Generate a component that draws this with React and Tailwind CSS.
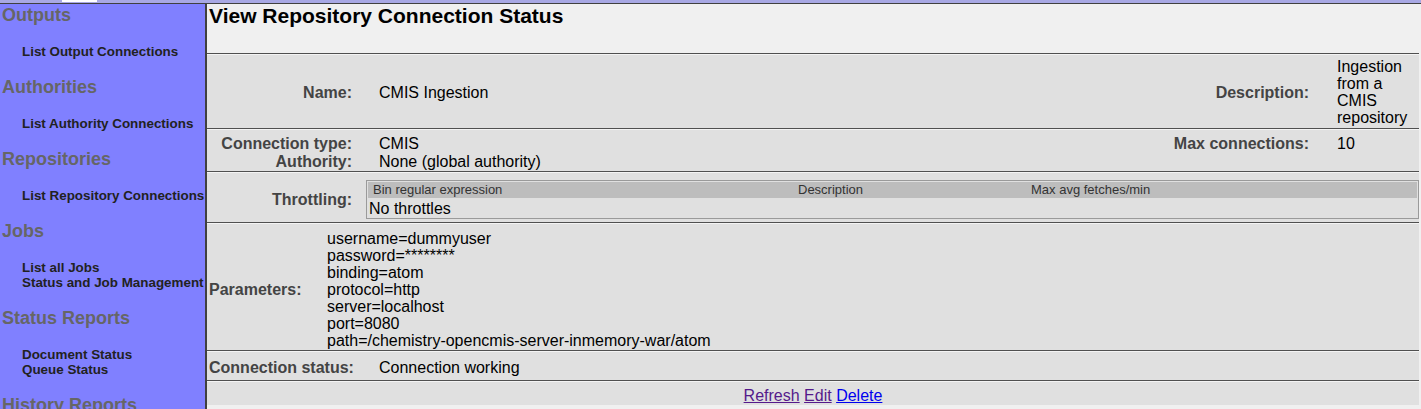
import React from "react";

const font = { fontFamily: '"Liberation Sans", Arial, Helvetica, sans-serif' };

const nav = [
  { title: "Outputs", links: ["List Output Connections"] },
  { title: "Authorities", links: ["List Authority Connections"] },
  { title: "Repositories", links: ["List Repository Connections"] },
  { title: "Jobs", links: ["List all Jobs", "Status and Job Management"] },
  { title: "Status Reports", links: ["Document Status", "Queue Status"] },
  { title: "History Reports", links: [] },
];

const params = [
  "username=dummyuser",
  "password=********",
  "binding=atom",
  "protocol=http",
  "server=localhost",
  "port=8080",
  "path=/chemistry-opencmis-server-inmemory-war/atom",
];

function Separator() {
  return <div className="h-[2px] border-t border-[#505050] bg-[#f4f4f4]" />;
}

function Sidebar() {
  return (
    <div className="w-[207px] shrink-0 bg-[#8080ff] border-r-2 border-[#404040] overflow-hidden">
      {nav.map((group) => (
        <div key={group.title}>
          <div className="pl-[2px] text-[18px] leading-[22px] font-bold text-[#666666] whitespace-nowrap">
            {group.title}
          </div>
          {group.links.length > 0 && (
            <ul className="mt-[18px] mb-[17px] pl-[22px]">
              {group.links.map((l) => (
                <li key={l} className="text-[13.4px] leading-[15px] font-bold text-[#222222] whitespace-nowrap">
                  {l}
                </li>
              ))}
            </ul>
          )}
        </div>
      ))}
    </div>
  );
}

function Label({ children, className = "" }) {
  return <div className={"font-bold text-[#444444] whitespace-nowrap " + className}>{children}</div>;
}

export default function App() {
  return (
    <div className="h-[409px] w-[1421px] overflow-hidden flex flex-col bg-[#f0f0f0]" style={font}>
      <div className="h-[3px] bg-[#a8a8e4] relative shrink-0">
        <div className="absolute left-[62px] top-0 w-[35px] h-[2px] bg-white" />
      </div>
      <div className="h-px bg-[#404040] shrink-0" />
      <div className="flex flex-1 min-h-0">
        <Sidebar />
        <div className="flex-1 flex flex-col text-[16px] leading-[17px] text-black">
          <div className="h-[49px] pl-[2px]">
            <h1 className="text-[21px] leading-[24px] font-bold text-black">View Repository Connection Status</h1>
          </div>
          <div className="mr-[2px] bg-[#e0e0e0]">
            <Separator />
            {/* name / description */}
            <div className="flex items-center pt-[3px] pb-[2px]">
              <Label className="w-[172px] pr-[27px] text-right">Name:</Label>
              <div className="flex-1">CMIS Ingestion</div>
              <Label className="pr-[28px] text-right">Description:</Label>
              <div className="w-[82px] pr-[4px]">Ingestion from a CMIS repository</div>
            </div>
            <Separator />
            {/* type / authority */}
            <div className="pt-[5px] leading-[18px]">
              <div className="flex">
                <Label className="w-[172px] pr-[27px] text-right">Connection type:</Label>
                <div className="flex-1">CMIS</div>
                <Label className="pr-[28px] text-right">Max connections:</Label>
                <div className="w-[82px]">10</div>
              </div>
              <div className="flex">
                <Label className="w-[172px] pr-[27px] text-right">Authority:</Label>
                <div className="flex-1">None (global authority)</div>
              </div>
            </div>
            <Separator />
            {/* throttling */}
            <div className="flex items-center pt-[7px] pb-[3px]">
              <Label className="w-[145px] text-right">Throttling:</Label>
              <div className="ml-[14px] flex-1 border border-[#9a9a9a] p-px">
                <div className="flex h-[16px] items-center bg-[#bdbdbd] text-[13px] leading-[16px] text-[#333333]">
                  <div className="w-[430px] pl-[5px]">Bin regular expression</div>
                  <div className="w-[233px]">Description</div>
                  <div className="flex-1">Max avg fetches/min</div>
                </div>
                <div className="h-[19px] pl-px pt-[2px] leading-[17px]">No throttles</div>
              </div>
            </div>
            <Separator />
            {/* parameters */}
            <div className="flex items-center pt-[6px] pb-px">
              <Label className="w-[120px] pl-[2px]">Parameters:</Label>
              <div>
                {params.map((p) => (
                  <div key={p}>{p}</div>
                ))}
              </div>
            </div>
            <Separator />
            {/* status */}
            <div className="flex pt-[7px] pb-[4px]">
              <Label className="w-[172px] pl-[2px]">Connection status:</Label>
              <div>Connection working</div>
            </div>
            <Separator />
            <div className="pt-[5px] pb-[1px] text-center">
              <a href="#" className="underline text-[#551a8b]">Refresh</a>{" "}
              <a href="#" className="underline text-[#551a8b]">Edit</a>{" "}
              <a href="#" className="underline text-[#0000ee]">Delete</a>
            </div>
          </div>
        </div>
      </div>
    </div>
  );
}
